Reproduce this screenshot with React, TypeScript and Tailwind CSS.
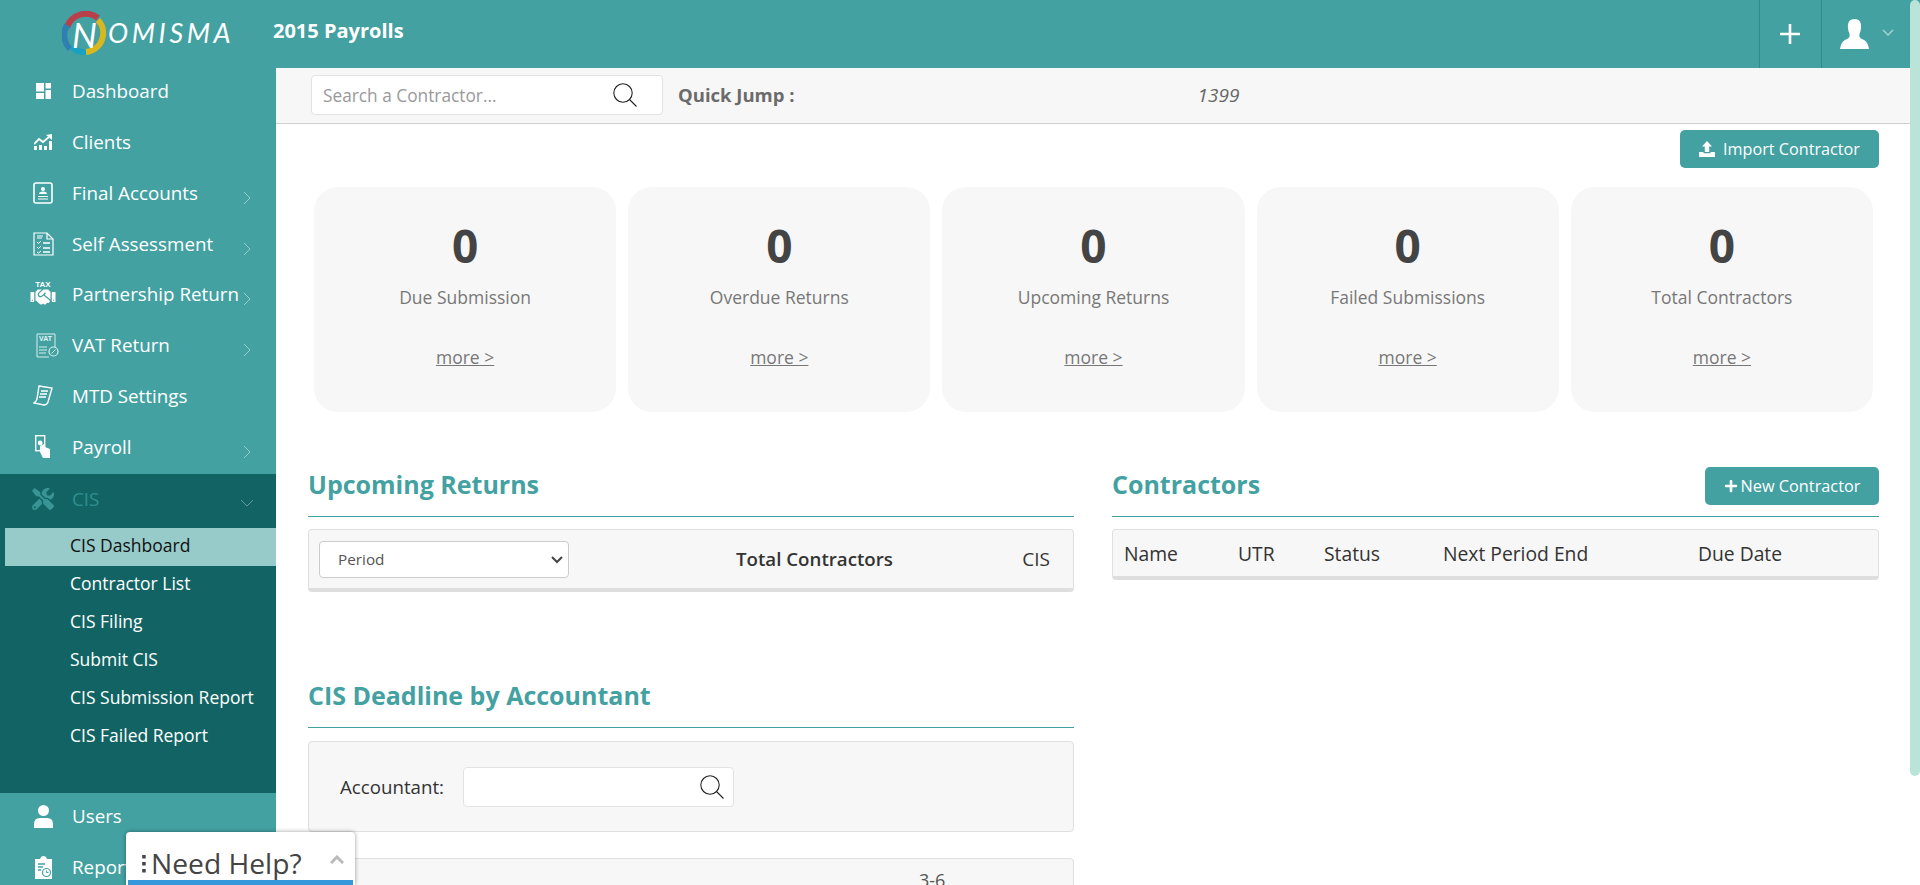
import { ReactNode } from 'react';
import { FaHandshake, FaPlus, FaTools } from 'react-icons/fa';

const DashboardIcon = () => (
  <svg width="15" height="16" viewBox="0 0 15 16" fill="#fff">
    <rect x="0" y="0" width="8" height="8.5" />
    <rect x="0" y="10" width="8" height="6" />
    <rect x="9.5" y="0" width="5.5" height="5.5" />
    <rect x="9.5" y="7" width="5.5" height="9" />
  </svg>
);

const ClientsIcon = () => (
  <svg width="19" height="16" viewBox="0 0 19 16" fill="#fff">
    <rect x="0" y="12" width="3" height="4" />
    <rect x="5" y="11" width="3" height="5" />
    <rect x="10" y="12" width="3" height="4" />
    <rect x="15" y="7" width="3" height="9" />
    <path d="M0 10 L5 5 L9 8 L15 3" fill="none" stroke="#fff" strokeWidth="1.8" />
    <path d="M12 1 L18 0 L18 6 Z" />
  </svg>
);

const FinalAccountsIcon = () => (
  <svg width="20" height="22" viewBox="0 0 20 22" fill="none">
    <rect x="1" y="1" width="18" height="20" rx="2" stroke="#fff" strokeWidth="1.6" />
    <circle cx="10" cy="7" r="2" fill="#fff" />
    <path d="M6 12 Q6 9.5 10 9.5 Q14 9.5 14 12 Z" fill="#fff" />
    <path d="M5 14.5 H15 M5 17 H15" stroke="#fff" strokeWidth="1.2" />
  </svg>
);

const SelfAssessmentIcon = () => (
  <svg width="21" height="24" viewBox="0 0 21 24" fill="none" stroke="#fff">
    <path d="M1 1 H14 L20 7 V23 H1 Z" strokeWidth="1.2" />
    <path d="M14 1 V7 H20" strokeWidth="1.2" />
    <path d="M4 10 L5.5 11.5 L8 9 M4 15 L5.5 16.5 L8 14 M4 20 L5.5 21 L8 19" strokeWidth="1" />
    <path d="M10 11 H17 M10 16 H17 M10 20 H17" strokeWidth="1.3" />
    <path d="M4 4 H10 M4 6 H9" strokeWidth="1" />
  </svg>
);

const PartnershipIcon = () => (
  <div className="flex flex-col items-center">
    <span className="text-[8px] font-bold leading-[8px] text-white font-['Liberation_Sans',sans-serif]">TAX</span>
    <FaHandshake className="h-[20px] w-[26px] -mt-[2px] text-white" />
  </div>
);

const VatIcon = () => (
  <svg width="23" height="25" viewBox="0 0 23 25" fill="none" stroke="#d8eeee" className="ml-[8px]">
    <path d="M1 1 H19 V14 M1 1 V24 H13" strokeWidth="1" />
    <text x="3" y="8" fontSize="7" fontWeight="700" fill="#e6f4f4" stroke="none" fontFamily="'Liberation Sans', sans-serif">VAT</text>
    <path d="M3 14 H11 M3 17 H11 M3 20 H10" strokeWidth="1.2" />
    <circle cx="17.5" cy="18.5" r="4.5" strokeWidth="1.2" />
    <path d="M15.5 20.5 L19.5 16.5" strokeWidth="1" />
  </svg>
);

const MtdIcon = () => (
  <svg width="20" height="21" viewBox="0 0 20 21" fill="none" stroke="#fff">
    <path d="M6 1 L19 3 L15 17 Q14 20 11 20 L1 18 Q3 17 4 14 Z" strokeWidth="1.4" />
    <path d="M8 6 H15 M7 9 H14 M6 12 H13" strokeWidth="1.4" />
  </svg>
);

const PayrollIcon = () => (
  <svg width="16" height="23" viewBox="0 0 16 23">
    <rect x="0.7" y="0.7" width="9" height="15" fill="none" stroke="#fff" strokeWidth="1.4" />
    <circle cx="5.2" cy="8" r="2.4" fill="#fff" />
    <path d="M5 11 L9 9 L10 12 L15 14 V23 H8 L5 17 Z" fill="#fff" />
  </svg>
);

const UsersIcon = () => (
  <svg width="19" height="23" viewBox="0 0 19 23" fill="#fff">
    <circle cx="9.5" cy="5.5" r="5.5" />
    <path d="M0 23 V19 Q0 13 6 13 H13 Q19 13 19 19 V23 Z" />
  </svg>
);

const ReportsIcon = () => (
  <svg width="17" height="23" viewBox="0 0 17 23">
    <path d="M0 3 H5 Q6 0 8.5 0 Q11 0 12 3 H17 V23 H0 Z" fill="#fff" />
    <path d="M3 8 H10 M3 11 H8 M3 14 H6" stroke="#43a1a2" strokeWidth="1.3" />
    <circle cx="11.5" cy="16.5" r="4" fill="#fff" stroke="#43a1a2" strokeWidth="1.2" />
    <path d="M11.5 14.5 V16.5 H13.5" fill="none" stroke="#43a1a2" strokeWidth="1" />
  </svg>
);

const UploadIcon = () => (
  <svg width="16" height="16" viewBox="0 0 16 16" fill="#fff">
    <path d="M8 0 L13 5.5 H10.2 V11 H5.8 V5.5 H3 Z" />
    <path d="M0 11 H4.5 V12.3 H11.5 V11 H16 V16 H0 Z" />
  </svg>
);

const SearchIcon = () => (
  <svg width="24" height="24" viewBox="0 0 24 24" fill="none" stroke="#222" strokeWidth="1.1">
    <circle cx="10" cy="10" r="9.2" />
    <path d="M16.5 16.5 L23.5 23.5" />
  </svg>
);

const Chevron = ({ open }: { open?: boolean }) =>
  open ? (
    <svg width="14" height="8" viewBox="0 0 14 8" fill="none" stroke="#fff" strokeOpacity="0.35" strokeWidth="1" className="ml-auto mr-[22px] mt-[8px]">
      <path d="M1 1 L7 7 L13 1" />
    </svg>
  ) : (
    <svg width="8" height="14" viewBox="0 0 8 14" fill="none" stroke="#fff" strokeOpacity="0.45" strokeWidth="1" className="ml-auto mr-[25px] mt-[10px] shrink-0">
      <path d="M1 1 L7 7 L1 13" />
    </svg>
  );

function NavItem({ icon, label, arrow }: { icon: ReactNode; label: string; arrow?: boolean }) {
  return (
    <div className="flex h-[50.75px] shrink-0 items-center pb-[4px] pl-[20px] text-[18.8px] text-white">
      <div className="mr-[6px] flex w-[46px] justify-center">{icon}</div>
      <span className="whitespace-nowrap">{label}</span>
      {arrow && <Chevron />}
    </div>
  );
}

const subItems = ['Contractor List', 'CIS Filing', 'Submit CIS', 'CIS Submission Report', 'CIS Failed Report'];

function Sidebar() {
  return (
    <aside className="flex w-[276px] shrink-0 flex-col overflow-hidden bg-[#43a1a2]">
      <NavItem icon={<DashboardIcon />} label="Dashboard" />
      <NavItem icon={<ClientsIcon />} label="Clients" />
      <NavItem icon={<FinalAccountsIcon />} label="Final Accounts" arrow />
      <NavItem icon={<SelfAssessmentIcon />} label="Self Assessment" arrow />
      <NavItem icon={<PartnershipIcon />} label="Partnership Return" arrow />
      <NavItem icon={<VatIcon />} label="VAT Return" arrow />
      <NavItem icon={<MtdIcon />} label="MTD Settings" />
      <NavItem icon={<PayrollIcon />} label="Payroll" arrow />

      {/* CIS open */}
      <div className="h-[319px] shrink-0 bg-[#126464]">
        <div className="flex h-[54px] items-center pb-[4px] pl-[20px] text-[18.8px] text-[#2f8e8e]">
          <div className="mr-[6px] flex w-[46px] justify-center">
            <FaTools className="h-[22px] w-[22px] text-[#3a9495]" />
          </div>
          <span>CIS</span>
          <Chevron open />
        </div>
        <div className="ml-[5px] flex h-[38px] items-center bg-[#97cbca] pb-[4px] pl-[65px] text-[17.5px] text-[#101010]">CIS Dashboard</div>
        {subItems.map((s) => (
          <div key={s} className="flex h-[38px] items-center pb-[4px] pl-[70px] text-[17.5px] text-white">
            {s}
          </div>
        ))}
      </div>

      <NavItem icon={<UsersIcon />} label="Users" />
      <NavItem icon={<ReportsIcon />} label="Reports" />
    </aside>
  );
}

function Header() {
  return (
    <header className="flex h-[68px] shrink-0 items-center bg-[#43a1a2] pr-[10px]">
      <div className="relative h-[68px] w-[273px] shrink-0">
        <svg width="46" height="46" viewBox="0 0 46 46" fill="none" className="absolute left-[62px] top-[11px]" strokeWidth="6">
          <path d="M5 16 A20 20 0 0 1 36 7" stroke="#b8404a" />
          <path d="M8 38 A20 20 0 0 1 5 14" stroke="#2f80b0" />
          <path d="M10 36 A18 18 0 0 0 24 41" stroke="#1aa0c0" />
          <path d="M24 41 A19 19 0 0 0 36 9" stroke="#d8b81e" />
        </svg>
        <span className="absolute left-[72px] top-[12px] text-[35px] italic leading-[44px] text-white font-['Lato',sans-serif]">N</span>
        <span className="absolute left-[108px] top-[16px] text-[27px] italic leading-[34px] tracking-[3.6px] text-white font-['Lato',sans-serif]">OMISMA</span>
      </div>
      <h1 className="text-[20px] font-bold text-white -mt-[6px]">2015 Payrolls</h1>
      <div className="ml-auto flex h-full">
        <div className="flex w-[62px] items-center justify-center border-l border-[#2e8a8b] pr-[2px]">
          <svg width="20" height="20" viewBox="0 0 20 20" stroke="#fff" strokeWidth="2.6">
            <path d="M10 0 V20 M0 10 H20" />
          </svg>
        </div>
        <div className="flex w-[89px] items-center border-l border-[#2e8a8b] pl-[18px]">
          <svg width="29" height="30" viewBox="0 0 29 30" fill="#fff">
            <path d="M14.5 0 C20 0 21.5 4 21 9 C20.8 12 20 13 19.5 15 C19 18 20 19 23 20.5 C26 22 28 24 29 30 H0 C1 24 3 22 6 20.5 C9 19 10 18 9.5 15 C9 13 8.2 12 8 9 C7.5 4 9 0 14.5 0 Z" />
          </svg>
          <svg width="12" height="7" viewBox="0 0 12 7" fill="none" stroke="#fff" strokeOpacity="0.5" strokeWidth="1.6" className="ml-[13px] -mt-[3px]">
            <path d="M1 1 L6 6 L11 1" />
          </svg>
        </div>
      </div>
    </header>
  );
}

const stats = ['Due Submission', 'Overdue Returns', 'Upcoming Returns', 'Failed Submissions', 'Total Contractors'];

function StatCard({ label }: { label: string }) {
  return (
    <div className="flex h-[225px] flex-col items-center rounded-[24px] bg-[#f7f7f7]">
      <div className="mt-[27px] text-[46px] font-bold leading-[62px] text-[#444]">0</div>
      <div className="mt-[9px] text-[17.5px] leading-[25px] text-[#777]">{label}</div>
      <a className="mt-[35px] text-[17.5px] leading-[25px] text-[#777] underline">more &gt;</a>
    </div>
  );
}

function SectionHead({ title, children }: { title: string; children?: ReactNode }) {
  return (
    <div className="flex h-[50px] items-start justify-between border-b border-[#43a1a2]">
      <h2 className="text-[25px] font-bold leading-[35px] text-[#43a1a2]">{title}</h2>
      {children}
    </div>
  );
}

const contractorCols = ['Name', 'UTR', 'Status', 'Next Period End', 'Due Date'];

export default function App() {
  return (
    <div className="relative flex h-[885px] flex-col overflow-hidden bg-white font-['Open_Sans',sans-serif]">
      <Header />
      <div className="flex min-h-0 flex-1">
        <Sidebar />
        <main className="min-w-0 flex-1 overflow-hidden">
          {/* Search strip */}
          <div className="flex h-[56px] items-center border-b border-[#cfcfcf] bg-[#f7f7f7] pb-[1px] pl-[35px]">
            <div className="flex h-[40px] w-[352px] items-center justify-between rounded-[4px] border border-[#e3e3e3] bg-white pl-[11px] pr-[25px]">
              <span className="pt-[2px] text-[17.3px] text-[#999]">Search a Contractor...</span>
              <SearchIcon />
            </div>
            <span className="ml-[15px] text-[18.5px] font-bold text-[#6b6b6b]">Quick Jump :</span>
            <span className="ml-[403px] text-[19px] italic text-[#666]">1399</span>
          </div>

          <div className="pl-[32px] pr-[41px]">
            <div className="mt-[6px] flex justify-end">
              <button className="flex h-[38px] w-[199px] items-center justify-center gap-[8px] rounded-[5px] bg-[#43a1a2] text-[16.2px] text-white">
                <UploadIcon />
                Import Contractor
              </button>
            </div>

            <div className="mt-[19px] grid grid-cols-5 gap-[12px] px-[6px]">
              {stats.map((s) => (
                <StatCard key={s} label={s} />
              ))}
            </div>

            <div className="mt-[55px] grid grid-cols-[766px_767px] gap-x-[38px]">
              <div>
                <SectionHead title="Upcoming Returns" />
                <div className="mt-[12px] flex h-[63px] items-center rounded-[4px] border border-b-[4px] border-[#e0e0e0] border-b-[#dedede] bg-[#f7f7f7] pl-[10px] pr-[23px]">
                  <div className="relative h-[37px] w-[250px] shrink-0">
                    <select className="h-full w-full appearance-none rounded-[4px] border border-[#ccc] bg-white pl-[18px] text-[15.3px] text-[#555]">
                      <option>Period</option>
                    </select>
                    <svg width="12" height="8" viewBox="0 0 12 8" fill="none" stroke="#444" strokeWidth="2" className="pointer-events-none absolute right-[6px] top-[15px]">
                      <path d="M1 1 L6 6 L11 1" />
                    </svg>
                  </div>
                  <span className="ml-[167px] text-[18.7px] font-semibold text-[#333]">Total Contractors</span>
                  <span className="ml-auto text-[19px] font-medium text-[#333]">CIS</span>
                </div>

                <div className="mt-[86px]">
                  <SectionHead title="CIS Deadline by Accountant" />
                </div>
                <div className="mt-[13px] flex h-[91px] items-center rounded-[4px] border border-[#e0e0e0] bg-[#f7f7f7] pl-[31px]">
                  <span className="pt-[2px] text-[18.7px] text-[#333]">Accountant:</span>
                  <div className="ml-[19px] flex h-[40px] w-[271px] items-center justify-end rounded-[4px] border border-[#e3e3e3] bg-white pr-[9px]">
                    <SearchIcon />
                  </div>
                </div>
                <div className="mt-[26px] h-[80px] rounded-[4px] border border-[#e0e0e0] bg-[#f7f7f7] pl-[610px] pt-[8px] text-[18px] text-[#555]">3-6</div>
              </div>

              <div>
                <SectionHead title="Contractors">
                  <button className="flex h-[38px] w-[174px] items-center justify-center gap-[3px] rounded-[5px] bg-[#43a1a2] text-[16.3px] text-white">
                    <FaPlus className="h-[14px] w-[14px]" />
                    New Contractor
                  </button>
                </SectionHead>
                <div className="mt-[12px] grid h-[51px] grid-cols-[114px_86px_119px_255px_1fr] items-center rounded-[4px] border border-b-[4px] border-[#e0e0e0] border-b-[#dedede] bg-[#f7f7f7] pl-[11px] pt-[2px] text-[19.3px] font-medium text-[#333]">
                  {contractorCols.map((c) => (
                    <span key={c}>{c}</span>
                  ))}
                </div>
              </div>
            </div>
          </div>
        </main>
      </div>

      {/* scrollbar thumb */}
      <div className="absolute right-0 top-0 h-[776px] w-[10px] rounded-full bg-[#bae4d8]" />

      {/* help widget */}
      <div className="absolute left-[126px] top-[832px] flex h-[53px] w-[229px] flex-col rounded-t-[4px] bg-white px-[2px] shadow-[0_0_4px_rgba(0,0,0,0.4)]">
        <div className="flex min-h-0 flex-1 items-start">
          <svg width="6" height="18" viewBox="0 0 6 18" fill="#444" className="ml-[13px] mt-[23px]">
            <rect x="1.2" y="0" width="3.5" height="3.5" />
            <rect x="1.2" y="7" width="3.5" height="3.5" />
            <rect x="1.2" y="14" width="3.5" height="3.5" />
          </svg>
          <span className="ml-[4px] mt-[11px] text-[28.2px] leading-[40px] text-[#444]">Need Help?</span>
          <svg width="14" height="9" viewBox="0 0 14 9" fill="none" stroke="#bbb" strokeWidth="3" className="ml-auto mr-[9px] mt-[23px]">
            <path d="M1 8 L7 2 L13 8" />
          </svg>
        </div>
        <div className="h-[5px] shrink-0 bg-[#3498db]" />
      </div>
    </div>
  );
}
